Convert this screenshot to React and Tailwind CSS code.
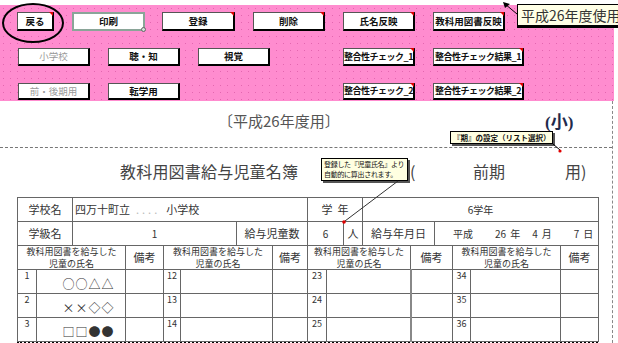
import React from "react";

const jp = "font-['Noto_Sans_CJK_JP',sans-serif]";

function Btn({ label, className = "", muted, tri, selected, small }) {
  return (
    <div
      className={`relative flex h-full items-center justify-center bg-white ${
        selected
          ? "border-2 border-[#8aa598]"
          : "border border-[#555] border-r-2 border-b-2 border-r-black border-b-black"
      } ${className}`}
    >
      <span
        className={`whitespace-nowrap ${small ? "text-[9px] tracking-[-0.5px]" : "text-[9.5px]"} ${
          muted ? "text-[#9a9a9a]" : "font-bold text-[#111]"
        }`}
      >
        {label}
      </span>
      {tri && (
        <span className="absolute -right-px -top-px h-0 w-0 border-l-[4px] border-t-[4px] border-l-transparent border-t-[#e00000]" />
      )}
      {selected && (
        <span className="absolute -bottom-[3px] -right-[3px] h-[5px] w-[5px] rounded-full border border-[#666] bg-[#cfe0d8]" />
      )}
    </div>
  );
}

const cell = "border border-[#666] text-[#333]";

function DataRow({ a, b, c, name }) {
  return (
    <tr className="h-[24px]">
      <td className={`${cell} p-0 align-top text-[9px] leading-[11px]`}>{a}</td>
      <td colSpan={2} className={`${cell} pl-[15px] pt-[5px] text-[12px] tracking-[1px]`}>
        {name}
      </td>
      <td className={cell}></td>
      <td className={`${cell} p-0 align-top text-[9px] leading-[11px]`}>{b}</td>
      <td colSpan={2} className={cell}></td>
      <td className={cell}></td>
      <td className={`${cell} p-0 align-top text-[9px] leading-[11px]`}>{c}</td>
      <td colSpan={3} className={`${cell} border-r-2 border-r-[#888]`}></td>
      <td colSpan={2} className={cell}></td>
      <td className={`${cell} p-0 align-top text-[9px] leading-[11px]`}>{c + 11}</td>
      <td className={cell}></td>
      <td className={cell}></td>
    </tr>
  );
}

const Head = () => (
  <span className="block whitespace-nowrap text-[9px] leading-[11.5px]">
    教科用図書を給与した
    <br />
    児童の氏名
  </span>
);

export default function App() {
  const widths = [19, 36, 53, 38, 17, 56, 36, 35, 19, 17, 19, 48, 24, 18, 18, 90, 38];
  return (
    <div className={`relative h-[343px] w-[618px] overflow-hidden bg-white ${jp}`}>
      {/* pink control band */}
      <div className="mt-[5px] flex h-[96px] w-[614px] flex-col bg-[#ff8ccf] bg-[radial-gradient(circle,#e466b0_0.6px,transparent_1px)] bg-[length:7px_7px] pt-[7px]">
        <div className="flex h-[19px]">
          <Btn label="戻る" tri className="ml-[17px] w-[37px]" />
          <Btn label="印刷" selected className="ml-[18px] w-[73px]" />
          <Btn label="登録" tri className="ml-[17px] w-[73px]" />
          <Btn label="削除" tri className="ml-[18px] w-[72px]" />
          <Btn label="氏名反映" tri className="ml-[18px] w-[72px]" />
          <Btn label="教科用図書反映" tri className="ml-[18px] w-[72px]" />
        </div>
        <div className="mt-[17px] flex h-[18px]">
          <Btn label="小学校" muted className="ml-[18px] w-[72px]" />
          <Btn label="聴・知" className="ml-[18px] w-[72px]" />
          <Btn label="視覚" className="ml-[18px] w-[72px]" />
          <Btn label="整合性チェック_1" small tri className="ml-[73px] w-[72px]" />
          <Btn label="整合性チェック結果_1" small tri className="ml-[18px] w-[91px]" />
        </div>
        <div className="mt-[17px] flex h-[17px]">
          <Btn label="前・後期用" muted className="ml-[18px] w-[72px]" />
          <Btn label="転学用" className="ml-[18px] w-[72px]" />
          <Btn label="整合性チェック_2" small tri className="ml-[163px] w-[72px]" />
          <Btn label="整合性チェック結果_2" small tri className="ml-[18px] w-[91px]" />
        </div>
      </div>

      {/* sheet */}
      <div className="h-[242px] w-[613px] border-r border-dashed border-[#888]">
        <div className="flex h-[47px] items-start border-b border-dashed border-[#777] pt-[9px]">
          <span className="ml-[218px] w-[327px] text-[15px] text-[#555]">〔平成26年度用〕</span>
          <span className="text-[17px] font-bold text-[#1f2b4d] font-['Liberation_Serif','Noto_Sans_CJK_JP',serif]">(小)</span>
        </div>
        <div className="flex h-[49px] items-start pt-[11px] text-[16px] text-[#444]">
          <span className="ml-[120px] w-[290px] tracking-[0.2px]">教科用図書給与児童名簿</span>
          <span className="w-[63px]">(</span>
          <span className="w-[92px]">前期</span>
          <span>用)</span>
        </div>
        <table className="ml-[17px] w-[581px] table-fixed border-collapse text-center text-[11px]">
          <colgroup>
            {widths.map((w, i) => (
              <col key={i} style={{ width: w }} />
            ))}
          </colgroup>
          <tbody>
            <tr className="h-[24px]">
              <td colSpan={2} className={cell}>学校名</td>
              <td colSpan={6} className={`${cell} pl-[2px] text-left`}>
                四万十町立<span className="mx-[6px] tracking-[3px] text-[#bbb]">....</span>小学校
              </td>
              <td colSpan={3} className={cell}>学&nbsp;&nbsp;年</td>
              <td colSpan={6} className={`${cell} text-[10px]`}>6学年</td>
            </tr>
            <tr className="h-[24px]">
              <td colSpan={2} className={cell}>学級名</td>
              <td colSpan={4} className={`${cell} text-[10px]`}>1</td>
              <td colSpan={2} className={cell}>給与児童数</td>
              <td colSpan={2} className={`${cell} text-[10px]`}>6</td>
              <td className={cell}>人</td>
              <td colSpan={2} className={cell}>給与年月日</td>
              <td colSpan={4} className={`${cell} whitespace-nowrap pl-[18px] text-left text-[10px]`}>
                平成<span className="ml-[22px]">26</span>
                <span className="ml-[4px]">年</span>
                <span className="ml-[12px]">4</span>
                <span className="ml-[4px]">月</span>
                <span className="ml-[22px]">7</span>
                <span className="ml-[4px]">日</span>
              </td>
            </tr>
            <tr className="h-[24px]">
              <td colSpan={3} className={`${cell} p-0`}><Head /></td>
              <td className={cell}>備考</td>
              <td colSpan={3} className={`${cell} p-0`}><Head /></td>
              <td className={cell}>備考</td>
              <td colSpan={4} className={`${cell} p-0`}><Head /></td>
              <td colSpan={2} className={cell}>備考</td>
              <td colSpan={2} className={`${cell} p-0`}><Head /></td>
              <td className={cell}>備考</td>
            </tr>
            <DataRow a={1} b={12} c={23} name="○○△△" />
            <DataRow a={2} b={13} c={24} name="××◇◇" />
            <DataRow a={3} b={14} c={25} name="□□●●" />
          </tbody>
        </table>
        <div className="ml-[17px] w-[581px] border-t-2 border-dotted border-black" />
      </div>

      {/* overlays: ellipse, comments and their pointers */}
      <div className="absolute left-[2px] top-[3px] h-[40px] w-[62px] rounded-[50%] border-[2.5px] border-black" />

      <div className="absolute left-[517px] top-[4px] flex h-[22px] w-[110px] items-center whitespace-nowrap border border-black bg-[#ffffe6] pl-[3px] text-[14px] leading-none text-[#333] shadow-[0_2px_0_#000]">
        平成26年度使用
      </div>

      <div className="absolute left-[450px] top-[131px] flex h-[13px] w-[103px] items-center whitespace-nowrap border border-black bg-[#ffffe1] pl-[2px] text-[7.5px] font-bold leading-none text-[#111] shadow-[2px_2px_0_#555]">
        『期』の設定（リスト選択）
      </div>

      <div className="absolute left-[321px] top-[158px] h-[23px] w-[87px] whitespace-nowrap border border-black bg-[#ffffe1] px-[2px] pt-[1px] text-[7px] leading-[9.5px] tracking-[-0.3px] text-[#111] shadow-[2px_2px_0_#555]">
        登録した『児童氏名』より
        <br />
        自動的に算出されます。
      </div>

      <svg className="pointer-events-none absolute left-0 top-0" width="618" height="343">
        <line x1="505" y1="4" x2="517" y2="14" stroke="#000" strokeWidth="1" />
        <polygon points="503,2 510,4 505,8" fill="#000" />
        <line x1="553" y1="144" x2="560" y2="150" stroke="#000" strokeWidth="1" />
        <circle cx="560" cy="151" r="1.6" fill="#e00000" />
        <line x1="398" y1="181" x2="345" y2="221" stroke="#333" strokeWidth="1" />
        <circle cx="344" cy="222" r="1.8" fill="#e00000" />
      </svg>
    </div>
  );
}
